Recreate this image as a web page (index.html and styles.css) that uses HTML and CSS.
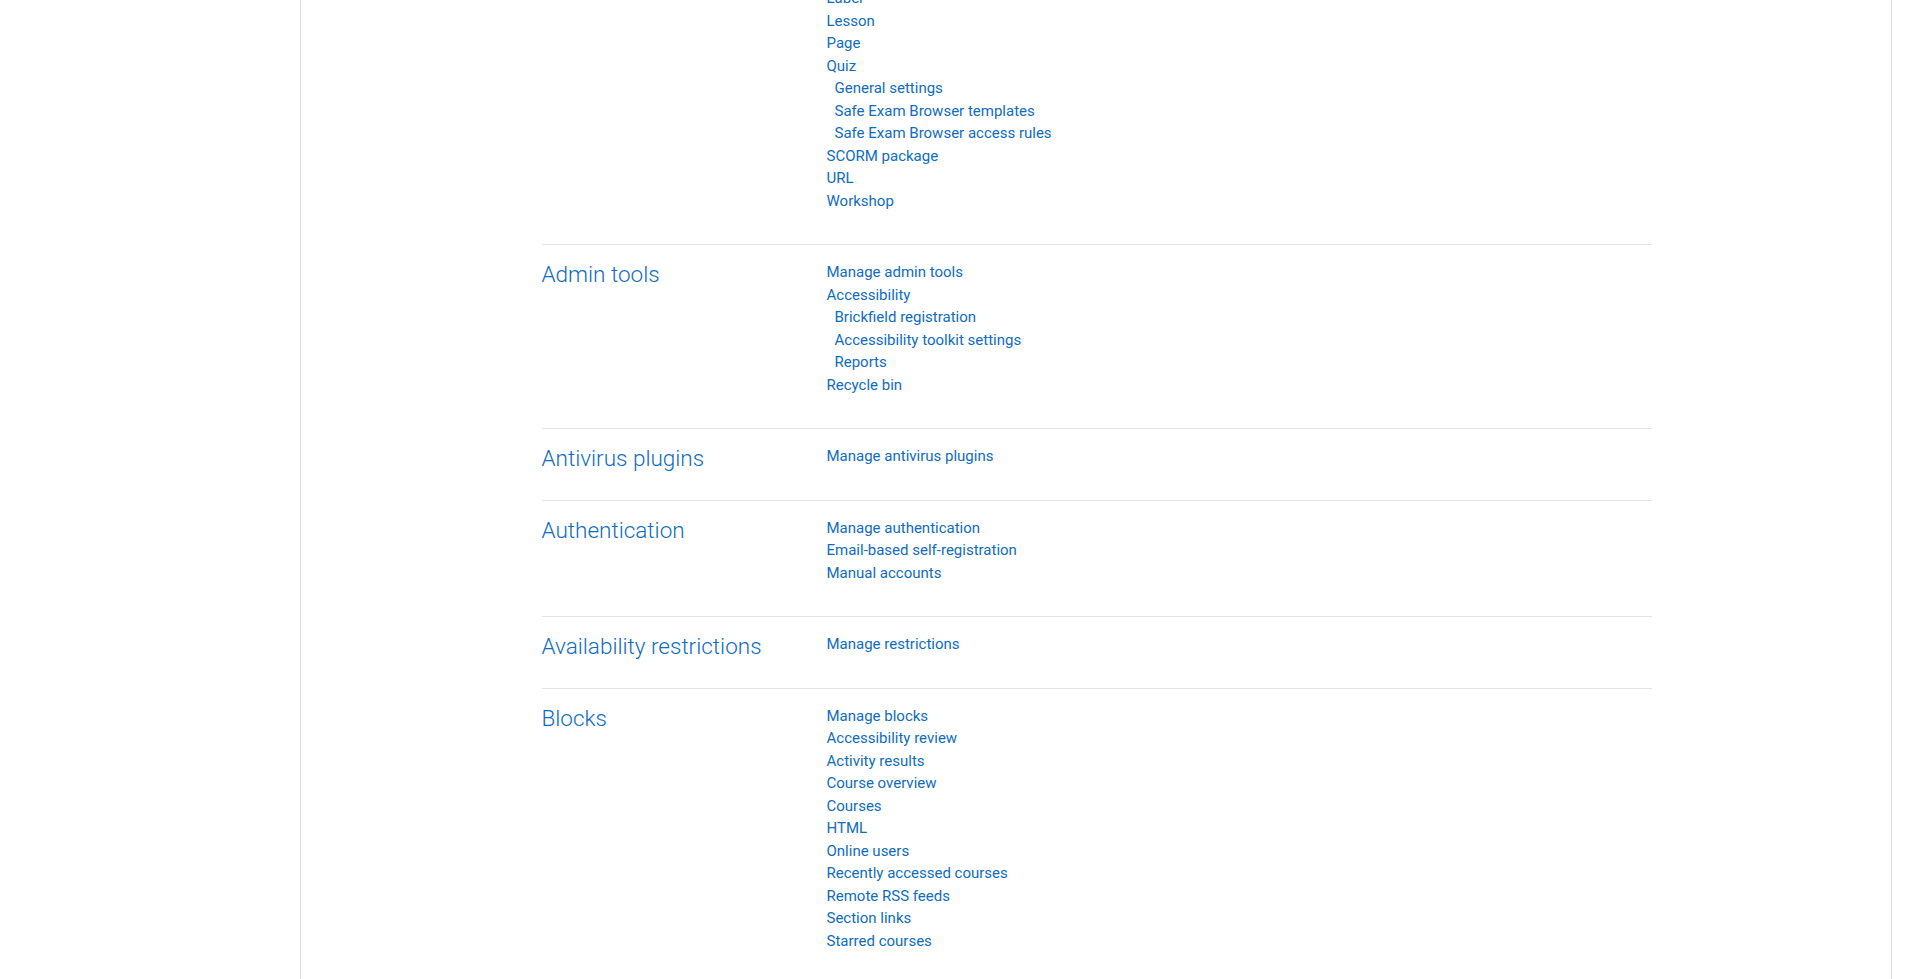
FILE: index.html
```html
<!DOCTYPE html>
<html lang="en">
<head>
<meta charset="utf-8">
<title>Site administration - Plugins</title>
<link rel="stylesheet" href="styles.css">
</head>
<body>
<div class="page">
  <aside class="drawer"></aside>
  <main class="main">
    <div class="container">
      <div class="row first">
        <div class="col-head"></div>
        <div class="col-links">
          <ul class="list">
            <li><a href="#">Label</a></li>
            <li><a href="#">Lesson</a></li>
            <li><a href="#">Page</a></li>
            <li><a href="#">Quiz</a>
              <ul class="list sub">
                <li><a href="#">General settings</a></li>
                <li><a href="#">Safe Exam Browser templates</a></li>
                <li><a href="#">Safe Exam Browser access rules</a></li>
              </ul>
            </li>
            <li><a href="#">SCORM package</a></li>
            <li><a href="#">URL</a></li>
            <li><a href="#">Workshop</a></li>
          </ul>
        </div>
      </div>
      <hr class="sep">
      <div class="row">
        <div class="col-head"><h4 class="heading"><a href="#">Admin tools</a></h4></div>
        <div class="col-links">
          <ul class="list">
            <li><a href="#">Manage admin tools</a></li>
            <li><a href="#">Accessibility</a>
              <ul class="list sub">
                <li><a href="#">Brickfield registration</a></li>
                <li><a href="#">Accessibility toolkit settings</a></li>
                <li><a href="#">Reports</a></li>
              </ul>
            </li>
            <li><a href="#">Recycle bin</a></li>
          </ul>
        </div>
      </div>
      <hr class="sep">
      <div class="row">
        <div class="col-head"><h4 class="heading"><a href="#">Antivirus plugins</a></h4></div>
        <div class="col-links">
          <ul class="list">
            <li><a href="#">Manage antivirus plugins</a></li>
          </ul>
        </div>
      </div>
      <hr class="sep">
      <div class="row">
        <div class="col-head"><h4 class="heading"><a href="#">Authentication</a></h4></div>
        <div class="col-links">
          <ul class="list">
            <li><a href="#">Manage authentication</a></li>
            <li><a href="#">Email-based self-registration</a></li>
            <li><a href="#">Manual accounts</a></li>
          </ul>
        </div>
      </div>
      <hr class="sep">
      <div class="row">
        <div class="col-head"><h4 class="heading"><a href="#">Availability restrictions</a></h4></div>
        <div class="col-links">
          <ul class="list">
            <li><a href="#">Manage restrictions</a></li>
          </ul>
        </div>
      </div>
      <hr class="sep">
      <div class="row">
        <div class="col-head"><h4 class="heading"><a href="#">Blocks</a></h4></div>
        <div class="col-links">
          <ul class="list">
            <li><a href="#">Manage blocks</a></li>
            <li><a href="#">Accessibility review</a></li>
            <li><a href="#">Activity results</a></li>
            <li><a href="#">Course overview</a></li>
            <li><a href="#">Courses</a></li>
            <li><a href="#">HTML</a></li>
            <li><a href="#">Online users</a></li>
            <li><a href="#">Recently accessed courses</a></li>
            <li><a href="#">Remote RSS feeds</a></li>
            <li><a href="#">Section links</a></li>
            <li><a href="#">Starred courses</a></li>
          </ul>
        </div>
      </div>
    </div>
  </main>
  <div class="edge"></div>
</div>
</body>
</html>
```
FILE: styles.css
```css
html, body {
  margin: 0;
  padding: 0;
  height: 100%;
  overflow: hidden;
  background: #fff;
}
body {
  font-family: Roboto, "Liberation Sans", sans-serif;
  font-size: 15px;
  line-height: 1.5;
  color: #1d2125;
}
.page {
  display: flex;
  height: 979px;
  overflow: hidden;
}
.drawer {
  width: 300px;
  flex: 0 0 300px;
  border-right: 1px solid #dee2e6;
}
.main {
  flex: 0 0 1591px;
  width: 1591px;
  border-right: 1px solid #dee2e6;
  display: flex;
  justify-content: center;
  padding-left: 1px;
  box-sizing: border-box;
}
.edge {
  flex: 1 1 auto;
}
.container {
  width: 1110px;
  margin-top: -13px;
}
.row {
  display: grid;
  grid-template-columns: 285px 1fr;
}
.heading {
  margin: 0 0 8px 0;
  font-size: 22.5px;
  line-height: 1.2;
  font-weight: 300;
}
.list {
  list-style: none;
  margin: 0 0 16px 0;
  padding: 0;
}
.list.sub {
  margin: 0 0 0 8px;
}
a {
  color: #0f6cbf;
  text-decoration: none;
}
.sep {
  margin: 16px 0;
  border: 0;
  border-top: 1px solid rgba(0, 0, 0, 0.1);
  height: 0;
}
```
